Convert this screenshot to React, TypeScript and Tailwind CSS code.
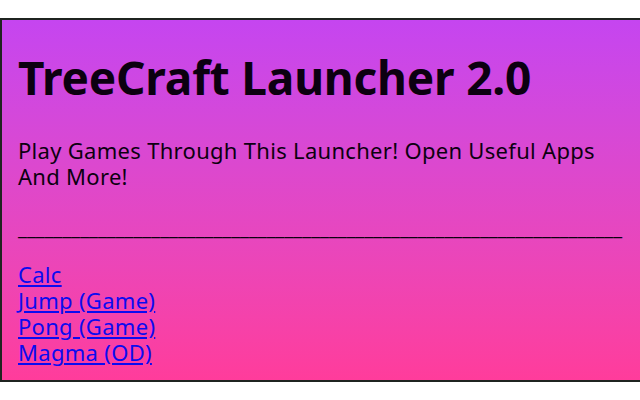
import React from "react";

const links = ["Calc", "Jump (Game)", "Pong (Game)", "Magma (OD)"];

const App: React.FC = () => {
  return (
    <div className="h-[400px] w-[640px] overflow-hidden bg-white pt-[18px] font-['Noto_Sans',sans-serif]">
      <div className="h-[364px] w-[700px] border-2 border-[#1f2420] bg-gradient-to-b from-[#c545f0] to-[#ff3c9b] pl-[16px] text-[#0c0010]">
        <h1 className="mt-[31px] text-[46px] font-bold leading-[52px] tracking-[-0.2px]">TreeCraft Launcher 2.0</h1>
        <p className="mt-[34px] w-[610px] text-[22px] leading-[26px] tracking-[0.3px]">
          Play Games Through This Launcher! Open Useful Apps And More!
        </p>
        <p className="mt-[25px] whitespace-nowrap text-[21px] font-semibold leading-[26px]">
          ____________________________________________________________________
        </p>
        <div className="mt-[21px] flex flex-col items-start text-[22px] leading-[26px] tracking-[0.3px]">
          {links.map((l) => (
            <a key={l} href="#" className="text-[#0b0bf0] underline">
              {l}
            </a>
          ))}
        </div>
      </div>
    </div>
  );
};

export default App;
